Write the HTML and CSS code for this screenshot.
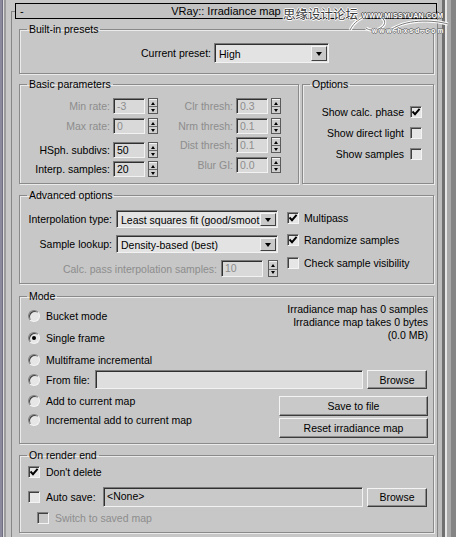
FILE: index.html
```html
<!DOCTYPE html>
<html>
<head>
<meta charset="utf-8">
<link rel="stylesheet" href="styles.css">
</head>
<body>
<div class="screen">
  <div class="edge-left"></div>
  <div class="main">
    <div class="rollout">
      <div class="titlebar"><span class="collapse">-</span><span class="title">VRay:: Irradiance map</span><span></span></div>
      <div class="rollout-body">

        <fieldset class="group g-presets">
          <legend>Built-in presets</legend>
          <div class="preset-row">
            <span class="lbl preset-lbl">Current preset:</span>
            <div class="dropdown dd-preset"><span class="dd-text">High</span><span class="dd-btn"><i class="tri-down"></i></span></div>
          </div>
        </fieldset>

        <div class="row2">
          <fieldset class="group g-basic">
            <legend>Basic parameters</legend>
            <div class="basic-body">
              <div class="col col-left">
                <div class="spin-row"><span class="lbl lbl-l dis">Min rate:</span><span class="field f-num dis">-3</span><span class="spinner"><span class="sp-half"><i class="tri-up"></i></span><span class="sp-half"><i class="tri-down-s"></i></span></span></div>
                <div class="spin-row mt4"><span class="lbl lbl-l dis">Max rate:</span><span class="field f-num dis">0</span><span class="spinner"><span class="sp-half"><i class="tri-up"></i></span><span class="sp-half"><i class="tri-down-s"></i></span></span></div>
                <div class="spin-row mt8"><span class="lbl lbl-l">HSph. subdivs:</span><span class="field f-num">50</span><span class="spinner"><span class="sp-half"><i class="tri-up"></i></span><span class="sp-half"><i class="tri-down-s"></i></span></span></div>
                <div class="spin-row mt3"><span class="lbl lbl-l">Interp. samples:</span><span class="field f-num">20</span><span class="spinner"><span class="sp-half"><i class="tri-up"></i></span><span class="sp-half"><i class="tri-down-s"></i></span></span></div>
              </div>
              <div class="col col-right">
                <div class="spin-row"><span class="lbl lbl-r dis">Clr thresh:</span><span class="field f-num dis">0.3</span><span class="spinner"><span class="sp-half"><i class="tri-up"></i></span><span class="sp-half"><i class="tri-down-s"></i></span></span></div>
                <div class="spin-row mt4"><span class="lbl lbl-r dis">Nrm thresh:</span><span class="field f-num dis">0.1</span><span class="spinner"><span class="sp-half"><i class="tri-up"></i></span><span class="sp-half"><i class="tri-down-s"></i></span></span></div>
                <div class="spin-row mt3"><span class="lbl lbl-r dis">Dist thresh:</span><span class="field f-num dis">0.1</span><span class="spinner"><span class="sp-half"><i class="tri-up"></i></span><span class="sp-half"><i class="tri-down-s"></i></span></span></div>
                <div class="spin-row mt4"><span class="lbl lbl-r dis">Blur GI:</span><span class="field f-num dis">0.0</span><span class="spinner"><span class="sp-half"><i class="tri-up"></i></span><span class="sp-half"><i class="tri-down-s"></i></span></span></div>
              </div>
            </div>
          </fieldset>

          <fieldset class="group g-options">
            <legend>Options</legend>
            <div class="options-body">
              <div class="opt-row"><span class="lbl">Show calc. phase</span><span class="check on"><svg viewBox="0 0 10 10" width="10" height="10"><path d="M1.5 4.5 L4 7.2 L8.6 1.8" fill="none" stroke="#000" stroke-width="1.9"/></svg></span></div>
              <div class="opt-row"><span class="lbl">Show direct light</span><span class="check"></span></div>
              <div class="opt-row"><span class="lbl">Show samples</span><span class="check"></span></div>
            </div>
          </fieldset>
        </div>

        <fieldset class="group g-adv">
          <legend>Advanced options</legend>
          <div class="adv-body">
            <div class="adv-left">
              <div class="adv-row r1"><span class="lbl lbl-adv">Interpolation type:</span><div class="dropdown dd-adv"><span class="dd-text">Least squares fit (good/smoot</span><span class="dd-btn"><i class="tri-down"></i></span></div></div>
              <div class="adv-row r2"><span class="lbl lbl-adv">Sample lookup:</span><div class="dropdown dd-adv"><span class="dd-text">Density-based (best)</span><span class="dd-btn"><i class="tri-down"></i></span></div></div>
              <div class="adv-row r3"><span class="lbl lbl-calc dis">Calc. pass interpolation samples:</span><span class="field f-calc dis">10</span><span class="spinner sp-calc"><span class="sp-half"><i class="tri-up"></i></span><span class="sp-half"><i class="tri-down-s"></i></span></span></div>
            </div>
            <div class="adv-right">
              <div class="chk-row c1"><span class="check on"><svg viewBox="0 0 10 10" width="10" height="10"><path d="M1.5 4.5 L4 7.2 L8.6 1.8" fill="none" stroke="#000" stroke-width="1.9"/></svg></span><span class="lbl">Multipass</span></div>
              <div class="chk-row c2"><span class="check on"><svg viewBox="0 0 10 10" width="10" height="10"><path d="M1.5 4.5 L4 7.2 L8.6 1.8" fill="none" stroke="#000" stroke-width="1.9"/></svg></span><span class="lbl">Randomize samples</span></div>
              <div class="chk-row c3"><span class="check"></span><span class="lbl">Check sample visibility</span></div>
            </div>
          </div>
        </fieldset>

        <fieldset class="group g-mode">
          <legend>Mode</legend>
          <div class="mode-body">
            <div class="mode-top">
              <div class="radios">
                <div class="radio-row m1"><span class="radio"></span><span class="lbl">Bucket mode</span></div>
                <div class="radio-row m2"><span class="radio sel"></span><span class="lbl">Single frame</span></div>
                <div class="radio-row m2"><span class="radio"></span><span class="lbl">Multiframe incremental</span></div>
              </div>
              <div class="info">
                <div>Irradiance map has 0 samples</div>
                <div>Irradiance map takes 0 bytes</div>
                <div>(0.0 MB)</div>
              </div>
            </div>
            <div class="file-row">
              <div class="file-left"><span class="radio"></span><span class="lbl">From file:</span></div>
              <span class="field f-file"></span>
              <span class="button b-browse">Browse</span>
            </div>
            <div class="mode-bottom">
              <div class="radios">
                <div class="radio-row m3"><span class="radio"></span><span class="lbl">Add to current map</span></div>
                <div class="radio-row m3"><span class="radio"></span><span class="lbl">Incremental add to current map</span></div>
              </div>
              <div class="btn-col">
                <span class="button b-wide">Save to file</span>
                <span class="button b-wide">Reset irradiance map</span>
              </div>
            </div>
          </div>
        </fieldset>

        <fieldset class="group g-end">
          <legend>On render end</legend>
          <div class="end-body">
            <div class="chk-row e1"><span class="check on"><svg viewBox="0 0 10 10" width="10" height="10"><path d="M1.5 4.5 L4 7.2 L8.6 1.8" fill="none" stroke="#000" stroke-width="1.9"/></svg></span><span class="lbl">Don't delete</span></div>
            <div class="auto-row">
              <div class="auto-left"><span class="check"></span><span class="lbl">Auto save:</span></div>
              <span class="field f-auto">&lt;None&gt;</span>
              <span class="button b-browse">Browse</span>
            </div>
            <div class="chk-row e3"><span class="check dis-box"></span><span class="lbl dis">Switch to saved map</span></div>
          </div>
        </fieldset>

      </div>
    </div>
  </div>
  <div class="edge-right"></div>

  <div class="watermark">
    <svg class="wm-swirl" width="110" height="30" viewBox="0 0 110 30"><path d="M6 22 C 14 6, 34 4, 40 12 C 44 18, 30 26, 22 20" fill="none" stroke="#fff" stroke-width="3"/><path d="M6 22 C 14 6, 34 4, 40 12 C 44 18, 30 26, 22 20" fill="none" stroke="#777" stroke-width="1"/><path d="M44 24 C 60 10, 90 12, 104 16" fill="none" stroke="#fff" stroke-width="3"/><path d="M44 24 C 60 10, 90 12, 104 16" fill="none" stroke="#777" stroke-width="1"/></svg>
    <span class="wm-cn">思缘设计论坛</span>
    <span class="wm-url">WWW.MISSYUAN.COM</span>
    <span class="wm-url2">www.hxsd.com</span>
  </div>
</div>
</body>
</html>
```
FILE: styles.css
```css
* { box-sizing: border-box; }

body {
  margin: 0;
  background: #c7c7c7;
  font-family: "Liberation Sans", Arial, sans-serif;
  font-size: 10.5px;
  color: #000;
}

.screen {
  position: relative;
  display: flex;
  width: 456px;
  height: 537px;
  overflow: hidden;
  background: #c7c7c7;
}

.edge-left {
  flex: none;
  width: 10px;
  background: linear-gradient(to right, #8a8a9c 0 2px, #6e6e80 2px 3px, #dcdcdc 3px 4px, #9c9c9c 4px 6px, #c7c7c7 6px 10px);
}

.main { flex: none; width: 428px; }

.edge-right {
  flex: 1;
  background: linear-gradient(to right, #bdbdbd 0 4px, #707070 4px 7px, #e6e6e6 7px 9px, #a9a9a9 9px 13px, #858585 13px 18px);
}

.rollout { margin: 3px 0 0 1px; width: 427px; }

.titlebar {
  position: relative;
  z-index: 1;
  margin-left: 4px;
  width: 422px;
  height: 16px;
  border: 1px solid #000;
  background: #c2c2c2;
  display: grid;
  grid-template-columns: 1fr auto 1fr;
  align-items: center;
  line-height: 14px;
  font-size: 11px;
}
.collapse { padding-left: 4px; font-size: 11px; }
.title { white-space: nowrap; }

.rollout-body {
  margin-top: -8px;
  height: 560px;
  border: 1px solid #878787;
  border-bottom: none;
  padding: 11px 3px 0 7px;
}

.group {
  margin: 0;
  padding: 0;
  min-width: 0;
  border: 1px solid #8a8a8a;
  box-shadow: 1px 1px 0 #ebebeb, inset 1px 1px 0 #ebebeb;
}
.group legend {
  margin-left: 7px;
  padding: 0 2px;
  line-height: 12px;
  height: 12px;
}

.lbl { white-space: nowrap; }
.dis { color: #8d8d8d; }

/* presets */
.preset-row { display: flex; align-items: center; padding: 8px 0 10px; }
.preset-lbl { width: 191px; text-align: right; }
.dd-preset { width: 115px; height: 20px; margin-left: 3px; }

/* generic widgets */
.field {
  display: block;
  flex: none;
  height: 16px;
  border: 1px solid;
  border-color: #7a7a7a #f2f2f2 #f2f2f2 #7a7a7a;
  box-shadow: inset 1px 1px 0 #303030;
  background: #d9d9d9;
  padding-left: 3px;
  line-height: 14px;
  white-space: nowrap;
  overflow: hidden;
}

.dropdown {
  display: flex;
  flex: none;
  border: 1px solid;
  border-color: #7a7a7a #f2f2f2 #f2f2f2 #7a7a7a;
  box-shadow: inset 1px 1px 0 #303030;
  background: #e3e3e3;
  padding: 2px 1px 1px 2px;
}
.dd-text {
  flex: 1;
  overflow: hidden;
  white-space: nowrap;
  padding-left: 2px;
  display: flex;
  align-items: center;
}
.dd-btn {
  flex: none;
  width: 16px;
  background: #c9c9c9;
  border: 1px solid;
  border-color: #f4f4f4 #404040 #404040 #f4f4f4;
  display: flex;
  align-items: center;
  justify-content: center;
}
.tri-down {
  width: 0; height: 0;
  border-left: 3.5px solid transparent;
  border-right: 3.5px solid transparent;
  border-top: 4px solid #000;
}

.spinner {
  display: flex;
  flex-direction: column;
  flex: none;
  width: 10px;
  height: 16px;
  margin-left: 3px;
  border: 1px solid #5a5a5a;
  background: #cfcfcf;
}
.sp-half {
  flex: 1;
  display: flex;
  align-items: center;
  justify-content: center;
  border-top: 1px solid #f4f4f4;
}
.sp-half + .sp-half { border-top: 1px solid #6a6a6a; }
.tri-up {
  width: 0; height: 0;
  border-left: 2.5px solid transparent;
  border-right: 2.5px solid transparent;
  border-bottom: 3px solid #000;
}
.tri-down-s {
  width: 0; height: 0;
  border-left: 2.5px solid transparent;
  border-right: 2.5px solid transparent;
  border-top: 3px solid #000;
}

.check {
  flex: none;
  width: 12px;
  height: 12px;
  border: 1px solid;
  border-color: #808080 #f4f4f4 #f4f4f4 #808080;
  box-shadow: inset 1px 1px 0 #404040;
  background: #e6e6e6;
  display: flex;
  align-items: center;
  justify-content: center;
}
.check svg { display: block; }
.check.dis-box { background: #c7c7c7; }

.radio {
  flex: none;
  width: 12px;
  height: 12px;
  border-radius: 50%;
  border: 1px solid;
  border-color: #808080 #f4f4f4 #f4f4f4 #808080;
  box-shadow: inset 1px 1px 0 #404040;
  background: #e6e6e6;
  display: flex;
  align-items: center;
  justify-content: center;
}
.radio.sel::after {
  content: "";
  width: 4px;
  height: 4px;
  border-radius: 50%;
  background: #000;
}

.button {
  display: flex;
  align-items: center;
  justify-content: center;
  flex: none;
  background: #c9c9c9;
  border: 1px solid;
  border-color: #f4f4f4 #3c3c3c #3c3c3c #f4f4f4;
  box-shadow: inset -1px -1px 0 #8a8a8a;
  white-space: nowrap;
}

/* basic + options */
.row2 { display: flex; gap: 3px; margin-top: 4px; }
.g-basic { width: 280px; flex: none; }
.g-options { width: 132px; flex: none; }

.basic-body { display: flex; height: 93px; padding-top: 8px; }
.col { display: flex; flex-direction: column; }
.spin-row { display: flex; align-items: center; height: 16px; }
.mt3 { margin-top: 3px; }
.mt4 { margin-top: 4px; }
.mt8 { margin-top: 8px; }
.lbl-l { width: 90px; text-align: right; }
.lbl-r { width: 71px; text-align: right; }
.f-num { width: 32px; margin-left: 3px; }
.col-right { margin-left: 4px; }

.options-body {
  height: 93px;
  padding: 15px 11px 0 0;
  display: flex;
  flex-direction: column;
  gap: 7px;
}
.opt-row { display: flex; justify-content: flex-end; align-items: center; height: 14px; gap: 6px; }

/* advanced */
.g-adv { margin-top: 5px; }
.adv-body { display: flex; height: 82px; }
.adv-left { width: 258px; flex: none; }
.adv-row { display: flex; align-items: stretch; }
.adv-row.r1 { margin-top: 9px; height: 18px; }
.adv-row.r2 { margin-top: 7px; height: 18px; }
.adv-row.r3 { margin-top: 7px; height: 17px; align-items: center; }
.adv-row .lbl { display: flex; align-items: center; justify-content: flex-end; }
.lbl-adv { width: 92px; }
.dd-adv { width: 162px; margin-left: 4px; }
.lbl-calc { width: 197px; }
.f-calc { width: 42px; height: 17px; margin-left: 4px; }
.sp-calc { margin-left: 5px; height: 17px; }

.adv-right { margin-left: 9px; }
.chk-row { display: flex; align-items: center; height: 14px; }
.chk-row .lbl { margin-left: 5px; }
.chk-row.c1 { margin-top: 10px; }
.chk-row.c2 { margin-top: 8px; }
.chk-row.c3 { margin-top: 9px; }

/* mode */
.g-mode { margin-top: 6px; }
.mode-body { padding: 0 5px 5px 8px; }
.mode-top { display: flex; justify-content: space-between; height: 65px; }
.radios { display: flex; flex-direction: column; }
.radio-row { display: flex; align-items: center; height: 14px; }
.radio-row .lbl { margin-left: 6px; }
.radio-row.m1 { margin-top: 7px; }
.radio-row.m2 { margin-top: 8px; }
.radio-row.m3 { margin-top: 5px; }
.info { text-align: right; line-height: 13px; padding-top: 1px; }

.file-row { display: flex; align-items: center; height: 19px; margin-top: 3px; }
.file-left { width: 67px; flex: none; display: flex; align-items: center; }
.file-left .lbl { margin-left: 6px; }
.f-file { width: 268px; height: 19px; background: #dedede; }
.b-browse { width: 60px; height: 19px; margin-left: 4px; }

.mode-bottom { display: flex; justify-content: space-between; }
.btn-col { display: flex; flex-direction: column; gap: 2px; margin-top: 7px; }
.b-wide { width: 149px; height: 20px; }

/* on render end */
.g-end { margin-top: 5px; }
.end-body { padding: 0 5px 7px 8px; }
.chk-row.e1 { margin-top: 4px; }
.chk-row.e1 .lbl { margin-left: 6px; }
.auto-row { display: flex; align-items: center; height: 20px; margin-top: 8px; }
.auto-left { width: 75px; flex: none; display: flex; align-items: center; }
.auto-left .lbl { margin-left: 6px; }
.f-auto { width: 260px; height: 20px; background: #c9c9c9; line-height: 17px; }
.chk-row.e3 { margin-top: 4px; padding-left: 9px; }
.chk-row.e3 .lbl { margin-left: 6px; }

/* watermark overlay */
.watermark {
  position: absolute;
  z-index: 5;
  left: 282px;
  top: 4px;
  width: 174px;
  height: 34px;
  pointer-events: none;
}
.wm-cn {
  position: absolute;
  left: 1px;
  top: 2px;
  font-family: "Noto Sans CJK SC", sans-serif;
  font-size: 12.5px;
  line-height: 16px;
  color: #3a3a3a;
  text-shadow: 1px 0 0 #fff, -1px 0 0 #fff, 0 1px 0 #fff, 0 -1px 0 #fff;
}
.wm-swirl { position: absolute; left: 62px; top: 4px; }
.wm-url {
  position: absolute;
  left: 80px;
  top: 7px;
  font-family: "Liberation Sans", sans-serif;
  font-weight: bold;
  font-size: 7px;
  line-height: 9px;
  letter-spacing: 0.3px;
  color: #fff;
  text-shadow: 1px 0 0 #555, -1px 0 0 #555, 0 1px 0 #555, 0 -1px 0 #555;
}
.wm-url2 {
  position: absolute;
  left: 90px;
  top: 23px;
  font-family: "Liberation Sans", sans-serif;
  font-weight: bold;
  font-size: 6.5px;
  line-height: 8px;
  letter-spacing: 2.2px;
  color: #fff;
  text-shadow: 1px 0 0 #777, -1px 0 0 #777, 0 1px 0 #777, 0 -1px 0 #777;
}
```
